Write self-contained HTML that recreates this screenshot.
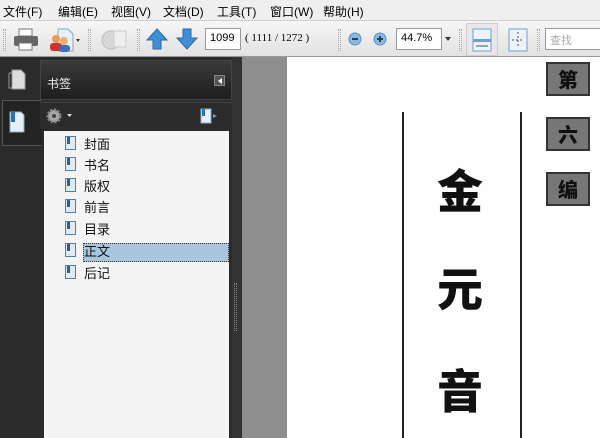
<!DOCTYPE html>
<html><head><meta charset="utf-8"><style>
*{margin:0;padding:0;box-sizing:border-box}
body{width:600px;height:438px;overflow:hidden;position:relative;background:#2b2b2b;font-family:"Liberation Sans","Noto Sans CJK SC",sans-serif;font-size:12px}
.a{position:absolute}
#menu{left:0;top:0;width:600px;height:20px;background:#efefef;color:#000;font-size:12px}
#menu span{position:absolute;top:3px}
#tb{left:0;top:20px;width:600px;height:37px;background:linear-gradient(#f6f6f6,#e2e2e2);border-top:1px solid #cfcfcf;border-bottom:1px solid #999}
.sep{position:absolute;top:8px;width:3px;height:22px;border-left:1px dotted #aaa;border-right:1px dotted #aaa}
.box{position:absolute;background:#fff;border:1px solid #999;font-size:11px;padding:3px 4px}
.bm{position:absolute;left:65px;width:11px;height:14px;background:#dfeaf4;border:1px solid #4a7fae}
.bm:after{content:"";position:absolute;left:1px;top:0;width:3px;height:7px;background:#2a5d9a}
.it{position:absolute;left:84px;font-size:13px;color:#111}
.pc{position:absolute;font-family:"Noto Sans CJK SC",sans-serif;font-weight:900;font-size:46px;color:#111}
.tag{position:absolute;left:546px;width:44px;height:34px;background:#777;border:2px solid #333;font-family:"Noto Sans CJK SC",sans-serif;font-weight:900;font-size:20px;color:#111;text-align:center;line-height:30px}
</style></head><body>
<div id="menu" class="a">
<span style="left:3px">文件(F)</span><span style="left:58px">编辑(E)</span><span style="left:111px">视图(V)</span><span style="left:163px">文档(D)</span><span style="left:217px">工具(T)</span><span style="left:270px">窗口(W)</span><span style="left:323px">帮助(H)</span>
</div>
<div id="tb" class="a">
<div class="sep" style="left:3px"></div>
<svg class="a" style="left:13px;top:7px" width="26" height="24"><rect x="6" y="1" width="13" height="7" fill="#fff" stroke="#777"/><rect x="1" y="8" width="24" height="10" rx="2" fill="#666"/><rect x="6" y="15" width="13" height="7" fill="#fff" stroke="#777"/></svg>
<svg class="a" style="left:48px;top:6px" width="32" height="26"><path d="M10 2h10l5 5v17H10z" fill="#e8eef6" stroke="#8aa"/><circle cx="8" cy="12" r="4" fill="#e89a50"/><rect x="2" y="16" width="12" height="8" rx="3" fill="#c33"/><circle cx="16" cy="14" r="4" fill="#e8b070"/><rect x="11" y="18" width="11" height="7" rx="3" fill="#3a6fc0"/><path d="M28 12l2 3 2-3z" fill="#333"/></svg>
<div class="sep" style="left:88px"></div>
<svg class="a" style="left:100px;top:6px" width="28" height="26"><circle cx="11" cy="13" r="9" fill="#d8d8d8" stroke="#bbb"/><rect x="14" y="4" width="12" height="16" fill="#eee" stroke="#ccc"/></svg>
<div class="sep" style="left:137px"></div>
<svg class="a" style="left:146px;top:7px" width="22" height="22"><path d="M11 1L1 12h6v9h8v-9h6z" fill="#3f8fd6" stroke="#2a6aa8"/></svg>
<svg class="a" style="left:176px;top:7px" width="22" height="22"><path d="M11 21L1 10h6V1h8v9h6z" fill="#3f8fd6" stroke="#2a6aa8"/></svg>
<div class="box" style="left:205px;top:7px;width:36px;height:22px">1099</div>
<div class="a" style="left:245px;top:11px;font-size:11px;font-family:'Liberation Serif',serif">( 1111 / 1272 )</div>
<div class="sep" style="left:338px"></div>
<svg class="a" style="left:348px;top:11px" width="14" height="14"><circle cx="7" cy="7" r="6" fill="#8fb6e0" stroke="#5b8fc6"/><rect x="4" y="6" width="6" height="2" fill="#245"/></svg>
<svg class="a" style="left:373px;top:11px" width="14" height="14"><circle cx="7" cy="7" r="6" fill="#8fb6e0" stroke="#5b8fc6"/><rect x="4" y="6" width="6" height="2" fill="#245"/><rect x="6" y="4" width="2" height="6" fill="#245"/></svg>
<div class="box" style="left:396px;top:7px;width:46px;height:22px">44.7%</div>
<svg class="a" style="left:445px;top:16px" width="6" height="4"><path d="M0 0h6l-3 4z" fill="#333"/></svg>
<div class="sep" style="left:459px"></div>
<div class="a" style="left:466px;top:2px;width:32px;height:33px;background:#e8e8e8;border:1px solid #ccc"></div>
<svg class="a" style="left:472px;top:7px" width="20" height="24"><rect x="1" y="1" width="18" height="22" fill="#eef3fa" stroke="#6f9fd0"/><rect x="1" y="11" width="18" height="3" fill="#6f9fd0"/><path d="M4 18h12" stroke="#357" /></svg>
<svg class="a" style="left:508px;top:7px" width="20" height="24"><rect x="1" y="1" width="18" height="22" fill="#eef3fa" stroke="#6f9fd0"/><path d="M10 4v16M4 12h12" stroke="#357" stroke-dasharray="2 2"/></svg>
<div class="sep" style="left:537px"></div>
<div class="box" style="left:545px;top:7px;width:60px;height:22px;color:#aaa">查找</div>
</div>
<svg class="a" style="left:8px;top:68px" width="20" height="22"><path d="M4 2h9l4 4v15H4z" fill="#ddd" stroke="#999"/><path d="M1 5h3M1 5v15h3" stroke="#999" fill="none"/></svg>
<div class="a" style="left:2px;top:100px;width:40px;height:46px;border:1px solid #555;border-right:none;background:#232323"></div>
<svg class="a" style="left:8px;top:110px" width="18" height="24"><path d="M2 2h11l3 3v17H2z" fill="#e6eef8" stroke="#8ab"/><rect x="3" y="2" width="4" height="10" fill="#2a6fbf"/></svg>
<div class="a" style="left:40px;top:60px;width:192px;height:40px;background:linear-gradient(#3a3a3a,#1e1e1e);border:1px solid #444"></div>
<div class="a" style="left:47px;top:75px;color:#eee;font-size:12px">书签</div>
<div class="a" style="left:214px;top:75px;width:11px;height:11px;background:#555;border:1px solid #888"><div style="margin:2px 0 0 3px;width:0;height:0;border:3px solid transparent;border-right:4px solid #fff;border-left:none"></div></div>
<div class="a" style="left:40px;top:102px;width:192px;height:26px;background:#2b2b2b;border-top:1px solid #444"></div>
<svg class="a" style="left:46px;top:108px" width="28" height="16"><circle cx="8" cy="8" r="6" fill="#aaa" stroke="#888" stroke-width="3" stroke-dasharray="2 1.5"/><circle cx="8" cy="8" r="2" fill="#444"/><path d="M21 6h5l-2.5 3z" fill="#ddd"/></svg>
<svg class="a" style="left:200px;top:108px" width="20" height="16"><path d="M1 1h10v14H1z" fill="#e6eef8" stroke="#8ab"/><rect x="2" y="1" width="3" height="7" fill="#2a6fbf"/><path d="M13 6l4 2-4 2z" fill="#6ab"/></svg>
<div class="a" style="left:44px;top:131px;width:185px;height:307px;background:#f4f4f4"></div>
<div class="a" style="left:83px;top:243px;width:146px;height:19px;background:#a7c6de;border:1px dotted #333"></div>
<div class="bm" style="top:136px"></div><div class="it" style="top:134px">封面</div>
<div class="bm" style="top:157px"></div><div class="it" style="top:155px">书名</div>
<div class="bm" style="top:178px"></div><div class="it" style="top:176px">版权</div>
<div class="bm" style="top:199px"></div><div class="it" style="top:197px">前言</div>
<div class="bm" style="top:221px"></div><div class="it" style="top:219px">目录</div>
<div class="bm" style="top:243px"></div><div class="it" style="top:241px">正文</div>
<div class="bm" style="top:265px"></div><div class="it" style="top:263px">后记</div>
<div class="a" style="left:232px;top:57px;width:10px;height:381px;background:#333"></div>
<div class="a" style="left:234px;top:283px;width:3px;height:48px;border-left:1px dotted #888;border-right:1px dotted #888"></div>
<div class="a" style="left:242px;top:57px;width:45px;height:381px;background:#8e8e8e"></div>
<div class="a" style="left:287px;top:57px;width:313px;height:381px;background:#fefefe"></div>
<div class="a" style="left:402px;top:112px;width:2px;height:326px;background:#222"></div>
<div class="a" style="left:520px;top:112px;width:2px;height:326px;background:#222"></div>
<div class="pc" style="left:437px;top:156px">金</div>
<div class="pc" style="left:437px;top:254px">元</div>
<div class="pc" style="left:437px;top:356px">音</div>
<div class="tag" style="top:62px">第</div>
<div class="tag" style="top:117px">六</div>
<div class="tag" style="top:172px">编</div>
</body></html>
